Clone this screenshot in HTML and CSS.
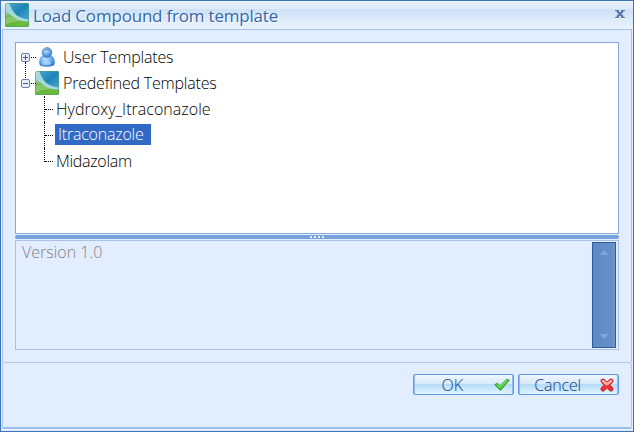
FILE: index.html
```html
<!DOCTYPE html>
<html lang="en">
<head>
<meta charset="utf-8">
<title>Load Compound from template</title>
<link rel="stylesheet" href="styles.css">
</head>
<body>
<svg width="0" height="0" class="defs" aria-hidden="true">
  <defs>
    <linearGradient id="green" x1="0" y1="0" x2="0.3" y2="1"><stop offset="0" stop-color="#d5ecd0"/><stop offset=".35" stop-color="#9dce8c"/><stop offset=".65" stop-color="#5bb13c"/><stop offset="1" stop-color="#6cba3a"/></linearGradient>
    <linearGradient id="blue" x1="0" y1="0" x2="1" y2="1"><stop offset="0" stop-color="#4aa5d0"/><stop offset=".5" stop-color="#1c83bb"/><stop offset="1" stop-color="#4fa9d0"/></linearGradient>
    <radialGradient id="person" cx=".4" cy=".3" r=".75"><stop offset="0" stop-color="#c5e5ff"/><stop offset=".5" stop-color="#6aaff0"/><stop offset="1" stop-color="#2f6fca"/></radialGradient>
    <symbol id="logo" viewBox="0 0 24 24">
      <rect width="24" height="24" rx="1.5" fill="url(#green)"/>
      <path d="M4 0H22.5Q24 0 24 1.500V17C15 16 8 11 4 0Z" fill="url(#blue)"/>
      <path d="M0 6Q1 2 4 1C7 11 14 15.500 24 16.500V18.500C16 18.500 11 17 7 13Q4 10 0 8Z" fill="#a3d8e4"/>
      <path d="M0 16Q5 12.500 10 14.500Q14 18 20 18.500Q8 17 0 22Z" fill="#a5d985" opacity=".55"/>
      <rect x=".5" y=".5" width="23" height="23" rx="1.500" fill="none" stroke="#4f9f70" stroke-opacity=".6"/>
    </symbol>
  </defs>
</svg>
<div class="window">
  <header class="titlebar">
    <svg class="logo"><use href="#logo"/></svg>
    <h1 class="title">Load Compound from template</h1>
    <svg class="close" viewBox="0 0 10 9"><path d="M0 .5H4M6 .5H10M0 7.500H4M6 7.500H10" stroke="#5878aa"/><path d="M2 1L8 7M8 1L2 7" stroke="#5878aa" stroke-width="2.200"/><path d="M0 8.500H4M6 8.500H10" stroke="#fff"/></svg>
  </header>
  <main class="content">
    <ul class="tree">
      <li class="row root first"><span class="toggle plus"></span><svg class="person" viewBox="0 0 16 20"><path d="M3.500 9C0 11 0 17 1.500 18.500Q8 20.500 14.500 18.500C16 17 16 11 12.500 9Z" fill="url(#person)" stroke="#5590d5" stroke-width=".7"/><circle cx="8" cy="5.500" r="4.900" fill="url(#person)" stroke="#4f80bd" stroke-width=".7"/><path d="M4 4Q8 -1 12 4Q8 2.500 4 4Z" fill="#657f9d" opacity=".7"/><ellipse cx="7.500" cy="16" rx="4.500" ry="2.200" fill="#b3dbff" opacity=".7"/></svg><span class="label users">User Templates</span></li>
      <li class="row root"><span class="toggle"></span><svg class="logo"><use href="#logo"/></svg><span class="label predefined">Predefined Templates</span></li>
      <li class="row child"><span class="label hydroxy">Hydroxy_Itraconazole</span></li>
      <li class="row child"><span class="label selected">Itraconazole</span></li>
      <li class="row child last"><span class="label midazolam">Midazolam</span></li>
    </ul>
    <div class="splitter"><i></i><i></i><i></i><i></i></div>
    <section class="description">
      <p class="version">Version 1.0</p>
      <div class="scrollbar"><i class="up"></i><i class="down"></i></div>
    </section>
  </main>
  <footer class="actions">
    <button class="btn ok"><span>OK</span><svg viewBox="0 0 16 14"><path d="M.7 6.700L3.500 5.200L5.700 8L13 1.200L15.300 2.200L6.500 12.500Z" fill="#45cc36" stroke="#278822" stroke-width=".8"/><path d="M3.300 6.500L5.700 9L13 2.300" fill="none" stroke="#99ef7e"/></svg></button>
    <button class="btn cancel"><span>Cancel</span><svg viewBox="0 0 14 14"><path d="M3 3L11 11M11 3L3 11" stroke="#b82b30" stroke-width="4.800" stroke-linecap="round"/><path d="M3 3L11 11M11 3L3 11" stroke="#f22f32" stroke-width="3.200" stroke-linecap="round"/><path d="M3 3L6.500 6M11 3L7.500 6" stroke="#ffa9a9" stroke-width="2.500" stroke-linecap="round"/></svg></button>
  </footer>
</div>
</body>
</html>
```
FILE: styles.css
```css
* { box-sizing: border-box; }
body { margin: 0; width: 634px; height: 432px; overflow: hidden; font: 300 16px/20px "Open Sans", "Noto Sans", sans-serif; color: #000; }
.defs { display: block; height: 0; }
.window { width: 634px; height: 432px; border: 1px solid #3e73b5; background: #e2eeff; display: flex; flex-direction: column; }
.titlebar { height: 28px; flex: none; display: flex; align-items: center; padding: 0 8px 0 4px; background: linear-gradient(#eaf2fc 0, #dceafa 8px, #cde1f7 8px, #e8f2fd 27px); }
.logo { width: 24px; height: 24px; flex: none; }
.title { margin: 2px auto 0 4px; font-size: 17px; line-height: 24px; font-weight: 400; letter-spacing: -0.2px; color: #3566ac; white-space: nowrap; text-shadow: 1px 1px #fff; }
.close { width: 10px; height: 9px; margin-bottom: 2px; }
.content { height: 333px; flex: none; margin: 0 1px; border: 1px solid #a5c3e9; border-bottom: 0; padding: 12px 12px 0; }
.tree { list-style: none; margin: 0; padding: 1px 0 0 5px; height: 192px; border: 1px solid #86a8d7; background: #fff; white-space: nowrap; }
.row { height: 26px; display: flex; align-items: center; position: relative; }
.row .label { line-height: 21px; }
.toggle { width: 9px; height: 9px; border: 1px solid #6a7dab; border-radius: 2px; background: linear-gradient(#4c5e91, #4c5e91) center / 5px 1px no-repeat, #e9effa; flex: none; }
.plus { background: linear-gradient(#4c5e91, #4c5e91) center / 5px 1px no-repeat, linear-gradient(#4c5e91, #4c5e91) center / 1px 5px no-repeat, #e9effa; }
.root::after { content: ""; position: absolute; left: 10px; top: 13px; width: 5px; border-top: 1px dotted #000; }
.first::before { content: ""; position: absolute; left: 4px; top: 18px; height: 16px; border-left: 1px dotted #000; }
.root .logo { margin-left: 5px; }
.person { width: 16px; height: 20px; margin: 0 8px 0 9px; flex: none; }
.root .logo + .label { margin-left: 4px; }
.users { letter-spacing: -0.16px; }
.predefined { letter-spacing: -0.2px; }
.hydroxy { letter-spacing: 0.03px; }
.midazolam { letter-spacing: -0.3px; }
.child { padding-left: 35px; }
.child::before { content: ""; position: absolute; left: 23px; top: 0; height: 26px; border-left: 1px dotted #000; }
.child::after { content: ""; position: absolute; left: 24px; top: 13px; width: 8px; border-top: 1px dotted #000; }
.last::before { height: 14px; }
.selected { margin: -1px 0 0 -1px; padding-left: 3px; width: 96px; letter-spacing: -0.22px; color: #fff; background: #316ac5; }
.splitter { height: 4px; margin: 1px 0; border-radius: 2px; background: #78a2dc; display: flex; justify-content: center; align-items: center; gap: 2px; }
.splitter i { width: 2px; height: 2px; background: #e9f2ff; }
.description { height: 110px; border: 1px solid #a9c1e5; display: flex; justify-content: space-between; padding: 1px 2px 1px 6px; }
.version { margin: 0; color: #808080; }
.scrollbar { width: 24px; height: 106px; border: 1px solid #2f5d9b; background: linear-gradient(90deg, #5f89c4, #658fcb 80%, #7094c5); display: flex; flex-direction: column; justify-content: space-between; align-items: center; padding: 7px 0 8px; }
.up, .down { width: 9px; height: 5px; background: #7fa6d9; }
.up { clip-path: polygon(50% 0, 100% 100%, 0 100%); }
.down { clip-path: polygon(0 0, 100% 0, 50% 100%); }
.actions { height: 67px; flex: none; margin: 0 1px; border: 1px solid #abc8ef; border-bottom: 2px solid #9cc0ec; border-radius: 3px 3px 2px 2px; padding: 11px 12px 0; display: flex; justify-content: flex-end; gap: 4px; }
.btn { width: 101px; height: 21px; border: 1px solid #639ae0; border-radius: 2px; padding: 0; font: inherit; line-height: 19px; color: #143d88; background: linear-gradient(#eff6fe, #d6e8fa 50%, #b6dbf7 50%, #def5ff); box-shadow: inset 1px 0 #8cbcf0, inset -1px 0 #8cbcf0; display: flex; align-items: center; justify-content: flex-end; }
.btn span { position: relative; top: 1px; }
.btn svg { fill: none; flex: none; }
.ok svg { width: 16px; height: 14px; margin: 0 3px 0 31px; }
.cancel span { letter-spacing: -0.2px; }
.cancel svg { width: 14px; height: 14px; margin: 0 4px 0 19px; }
```
